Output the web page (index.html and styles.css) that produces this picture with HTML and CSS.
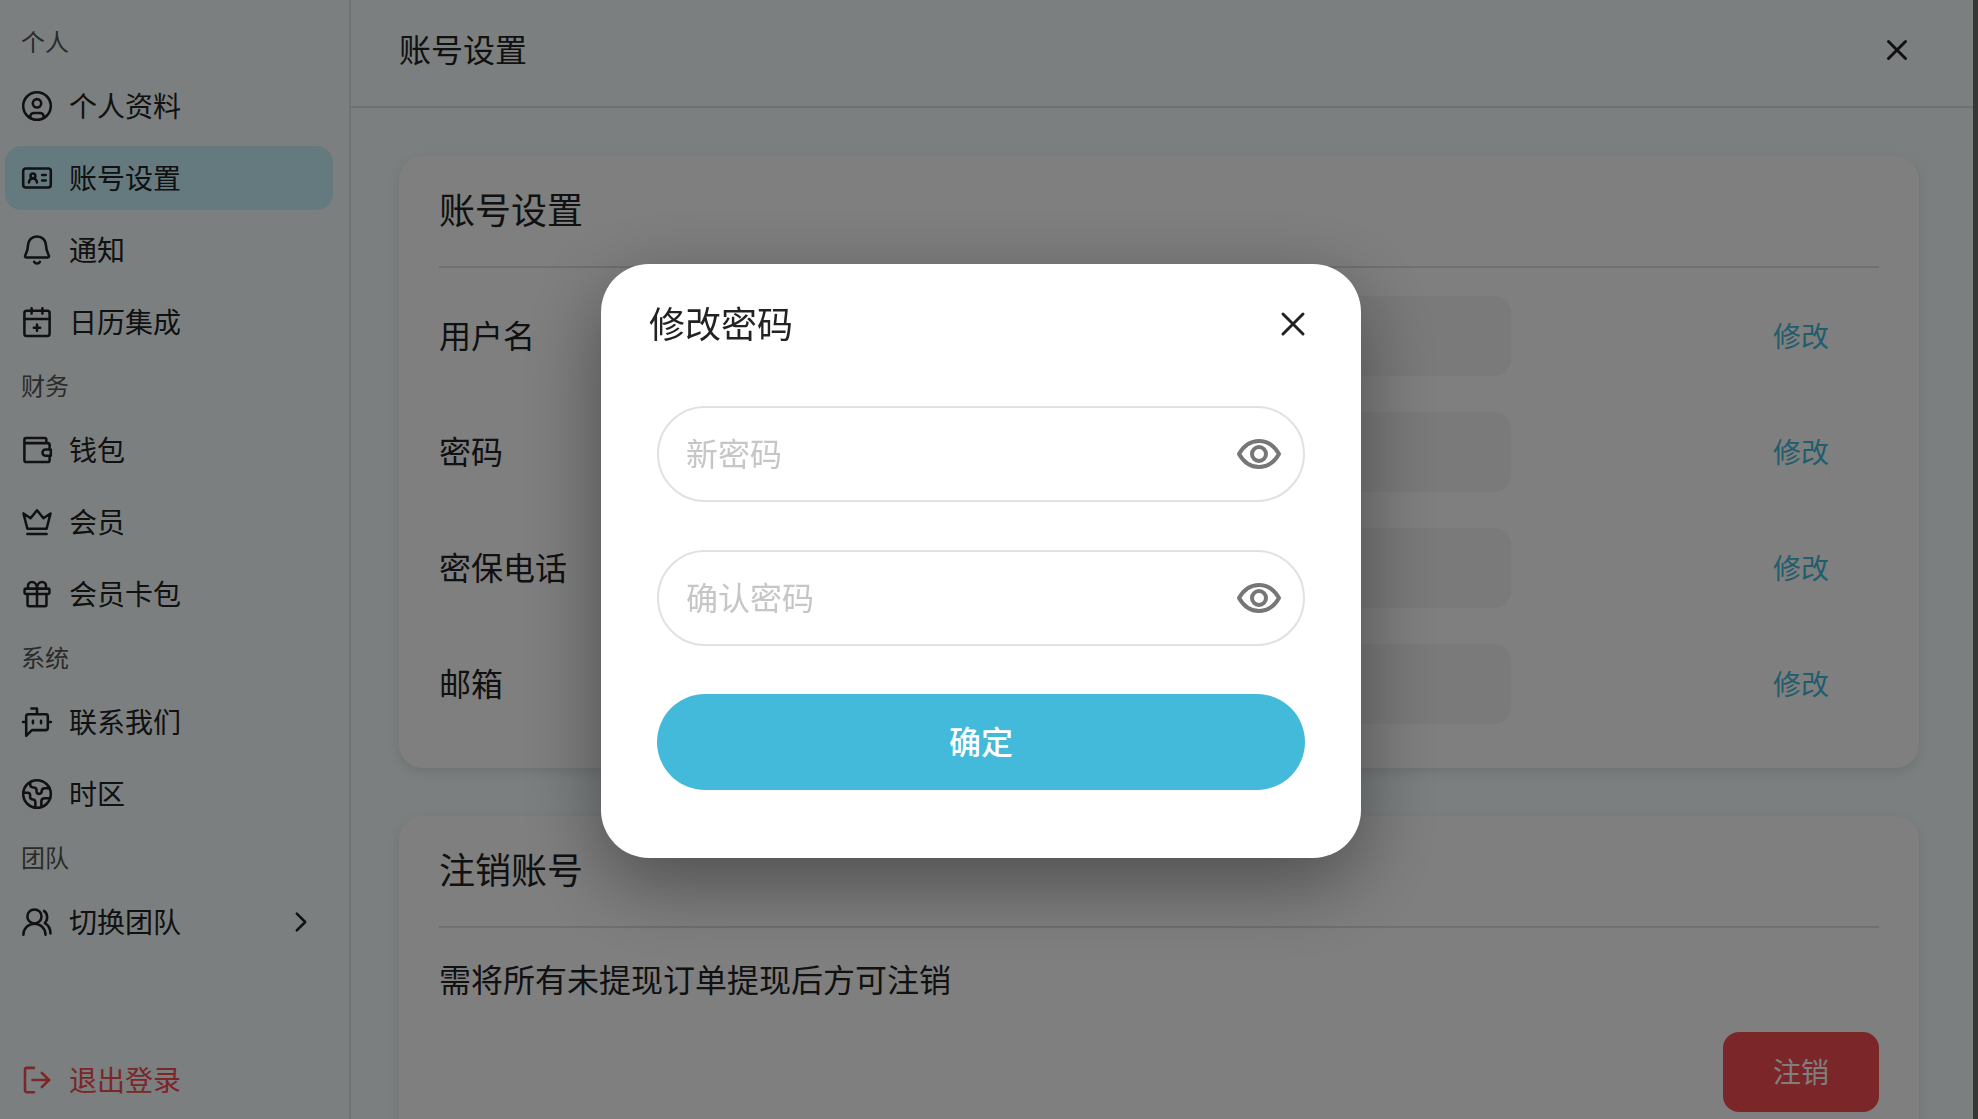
FILE: index.html
```
<!DOCTYPE html>
<html lang="zh-CN">
<head>
    <meta charset="UTF-8">
    <meta name="viewport" content="width=device-width, initial-scale=1.0">
    <title>账号设置</title>
    <link rel="stylesheet" href="styles.css">
</head>
<body>
    <div class="app">
        <nav class="sidebar">
            <h2 class="group">个人</h2>
            <a class="item" href="#profile">
                <svg class="icon" viewBox="0 0 24 24"><circle cx="12" cy="12" r="9.2"/><circle cx="12" cy="10.2" r="2.8"/><path d="M7.5 20v-.9a2.5 2.5 0 0 1 2.5-2.5h4a2.5 2.5 0 0 1 2.5 2.5v.9"/></svg>
                <span>个人资料</span>
            </a>
            <a class="item active" href="#account">
                <svg class="icon" viewBox="0 0 24 24"><rect x="2.8" y="5.7" width="18.4" height="12.6" rx="1.6"/><circle cx="9.3" cy="10.6" r="1.6"/><path d="M6.6 15c.2-1.7 1.2-2.7 2.7-2.7s2.5 1 2.7 2.7M15.4 10h2.4M15.4 13.7h2.4"/></svg>
                <span>账号设置</span>
            </a>
            <a class="item" href="#notice">
                <svg class="icon" viewBox="0 0 24 24"><path d="M12 3c-3.4 0-6 2.5-6 5.9 0 4.3-2 6.3-2 7.3 0 .5.3.8.8.8h14.4c.5 0 .8-.3.8-.8 0-1-2-3-2-7.3C18 5.500 15.4 3 12 3ZM10.1 19.9c.4.7 1.1 1.1 1.9 1.1s1.5-.4 1.9-1.1"/></svg>
                <span>通知</span>
            </a>
            <a class="item" href="#calendar">
                <svg class="icon" viewBox="0 0 24 24"><rect x="3.6" y="4.5" width="16.8" height="16.8" rx="1.5"/><path d="M3.6 10h16.8M8.4 2.8v3.6M15.6 2.8v3.6M12 13.7v4.2M9.9 15.8h4.2"/></svg>
                <span>日历集成</span>
            </a>
            <h2 class="group">财务</h2>
            <a class="item" href="#wallet">
                <svg class="icon" viewBox="0 0 24 24"><path d="M18.2 7.4V5a1 1 0 0 0-1-1H4.7a1.1 1.1 0 0 0-1.1 1.1v13.7A1.2 1.2 0 0 0 4.800 20h14.4a1.2 1.2 0 0 0 1.2-1.2V16M3.6 7.4h15.6a1.2 1.2 0 0 1 1.2 1.2v3M21.2 11.7h-3.500a2 2 0 0 0 0 4.100h3.500Z"/></svg>
                <span>钱包</span>
            </a>
            <a class="item" href="#vip">
                <svg class="icon" viewBox="0 0 24 24"><path d="M3 6.3 5.6 16.5h12.8L21 6.3l-4.7 3.2L12 4.200 7.700 9.500ZM5.600 20h12.800"/></svg>
                <span>会员</span>
            </a>
            <a class="item" href="#cards">
                <svg class="icon" viewBox="0 0 24 24"><rect x="3.7" y="8.4" width="16.6" height="3.6" rx=".8"/><path d="M5.7 12v7.2a1 1 0 0 0 1 1h10.6a1 1 0 0 0 1-1V12M12 8.4v11.8M12 8.400C12 5.600 10.500 4 8.600 4 6.400 4 5.200 6.200 6.400 8.400M12 8.400C12 5.600 13.500 4 15.400 4c2.200 0 3.400 2.200 2.200 4.400"/></svg>
                <span>会员卡包</span>
            </a>
            <h2 class="group">系统</h2>
            <a class="item" href="#contact">
                <svg class="icon" viewBox="0 0 24 24"><path d="M4.800 21.200V8.200A1.400 1.400 0 0 1 6.200 6.800h11.600a1.400 1.400 0 0 1 1.400 1.400V16a1.400 1.400 0 0 1-1.400 1.400H8.600ZM12 6.800V3H8.300M2.700 12h2M19.300 12h2M9.300 11.200v1.600M14.700 11.200v1.600"/></svg>
                <span>联系我们</span>
            </a>
            <a class="item" href="#timezone">
                <svg class="icon" viewBox="0 0 24 24"><circle cx="12" cy="12" r="9.2"/><path d="M7.5 4.200v1.700c0 1 .8 1.700 1.900 1.700 1.500 0 2.300.6 2.300 1.700v1c0 1 .7 1.600 1.700 1.600s1.700-.7 1.700-1.700c0-1.300.8-2 2.200-2h3M2.900 11.100h3c1 0 1.500.6 1.500 1.600v1.200c0 1.100.6 1.700 1.700 1.700 1.200 0 1.800.6 1.800 1.700v3.700M20.800 14.800h-3.600c-1.500 0-2.300.7-2.300 2.100v3.600"/></svg>
                <span>时区</span>
            </a>
            <h2 class="group">团队</h2>
            <a class="item" href="#team">
                <svg class="icon" viewBox="0 0 24 24"><circle cx="10.3" cy="8.3" r="4.7"/><path d="M2.900 20.500a7.400 7.400 0 0 1 14.800 0M16.700 4.600c2.500 1.800 2.800 5.700.5 8.100 2.200 1.200 3.700 3.800 3.800 6.900"/></svg>
                <span>切换团队</span>
                <svg class="icon arrow" viewBox="0 0 24 24"><path d="m9.200 6.400 5.600 5.600-5.600 5.600"/></svg>
            </a>
            <a class="item logout" href="#logout">
                <svg class="icon" viewBox="0 0 24 24"><path d="M10 3.900H5.200a1.200 1.200 0 0 0-1.200 1.200v13.800a1.200 1.200 0 0 0 1.200 1.200H10M9 12h11.200M15.200 7.200l4.800 4.800-4.800 4.800"/></svg>
                <span>退出登录</span>
            </a>
        </nav>

        <main class="main">
            <header class="topbar">
                <h1 class="page-title">账号设置</h1>
                <button class="close" type="button" aria-label="关闭">
                    <svg viewBox="0 0 32 32"><path d="m7.500 7.500 17 17m0-17-17 17"/></svg>
                </button>
            </header>
            <div class="content">
                <section class="card">
                    <h2 class="card-title">账号设置</h2>
                    <div class="rows">
                        <div class="row">
                            <label for="username">用户名</label>
                            <input class="value" id="username" type="text" disabled>
                            <button class="btn link" type="button">修改</button>
                        </div>
                        <div class="row">
                            <label for="password">密码</label>
                            <input class="value" id="password" type="text" disabled>
                            <button class="btn link" type="button">修改</button>
                        </div>
                        <div class="row">
                            <label for="phone">密保电话</label>
                            <input class="value" id="phone" type="text" disabled>
                            <button class="btn link" type="button">修改</button>
                        </div>
                        <div class="row">
                            <label for="email">邮箱</label>
                            <input class="value" id="email" type="text" disabled>
                            <button class="btn link" type="button">修改</button>
                        </div>
                    </div>
                </section>
                <section class="card">
                    <h2 class="card-title">注销账号</h2>
                    <p class="tip">需将所有未提现订单提现后方可注销</p>
                    <div class="actions">
                        <button class="btn danger" type="button">注销</button>
                    </div>
                </section>
            </div>
        </main>
    </div>

    <div class="overlay">
        <form class="modal" role="dialog" aria-modal="true" aria-labelledby="modalTitle">
            <div class="modal-head">
                <h2 class="modal-title" id="modalTitle">修改密码</h2>
                <button class="close" type="button" aria-label="关闭">
                    <svg viewBox="0 0 32 32"><path d="m6 6 20 20m0-20-20 20"/></svg>
                </button>
            </div>
            <div class="modal-body">
                <div class="field">
                    <input type="password" placeholder="新密码" aria-label="新密码">
                    <button class="eye" type="button" aria-label="显示密码">
                        <svg viewBox="0 0 48 48"><path d="M4 24c5-8.700 11.800-13 20-13s15 4.300 20 13c-5 8.700-11.800 13-20 13S9 32.700 4 24Z"/><circle cx="24" cy="24" r="7"/></svg>
                    </button>
                </div>
                <div class="field">
                    <input type="password" placeholder="确认密码" aria-label="确认密码">
                    <button class="eye" type="button" aria-label="显示密码">
                        <svg viewBox="0 0 48 48"><path d="M4 24c5-8.700 11.800-13 20-13s15 4.300 20 13c-5 8.700-11.800 13-20 13S9 32.700 4 24Z"/><circle cx="24" cy="24" r="7"/></svg>
                    </button>
                </div>
                <button class="submit" type="submit">确定</button>
            </div>
        </form>
    </div>
</body>
</html>
```
FILE: styles.css
```
* { box-sizing: border-box; }
body {
    margin: 0;
    background: #6c6c6c;
    color: #222;
    font-family: "Noto Sans CJK SC", sans-serif;
    font-size: 32px;
    line-height: 48px;
    overflow: hidden;
}
h1, h2, p { margin: 0; font-weight: 400; }
button, input { font: inherit; color: inherit; }
button { border: none; background: none; padding: 0; cursor: pointer; }
svg {
    display: block;
    fill: none;
    stroke: currentColor;
    stroke-linecap: round;
    stroke-linejoin: round;
}

.app {
    display: flex;
    height: 100vh;
    margin-right: 5px;
    background: #f7feff;
}

/* sidebar */
.sidebar {
    display: flex;
    flex-direction: column;
    flex: 0 0 351px;
    gap: 8px;
    padding: 18px 16px 7px 5px;
    border-right: 2px solid #e3e3e6;
}
.group {
    height: 48px;
    padding: 0 16px;
    font-size: 24px;
    line-height: 46px;
    color: #555;
}
.item {
    display: flex;
    align-items: center;
    gap: 14px;
    height: 64px;
    padding: 0 14px;
    border-radius: 16px;
    font-size: 28px;
    color: inherit;
    text-decoration: none;
}
.item span { padding-bottom: 2px; }
.item.active { background: #cbf5ff; }
.item.logout { margin-top: auto; color: #f64c50; }
.icon { width: 36px; height: 36px; stroke-width: 1.7; }
.arrow { margin-left: auto; }

/* main */
.main {
    display: flex;
    flex-direction: column;
    flex: 1;
    min-width: 0;
}
.topbar {
    display: flex;
    justify-content: space-between;
    align-items: center;
    flex: none;
    height: 108px;
    padding: 0 60px 6px 48px;
    border-bottom: 2px solid #e0e2e3;
}
.page-title { padding-bottom: 4px; font-size: 32px; }
.close svg { width: 32px; height: 32px; stroke-width: 3; }
.content {
    display: flex;
    flex-direction: column;
    flex: 1;
    gap: 48px;
    min-height: 0;
    padding: 48px 54px 0 48px;
    overflow: hidden;
}
.card {
    flex: none;
    padding: 28px 40px 44px;
    border-radius: 24px;
    background: #fff;
    box-shadow: 0 4px 12px rgba(0,0,0,0.1);
}
.card-title {
    padding-bottom: 34px;
    border-bottom: 2px solid #e0e0e0;
    font-size: 36px;
}
.rows {
    display: grid;
    gap: 36px;
    padding-top: 28px;
}
.row {
    display: grid;
    grid-template-columns: 200px 1fr 156px;
    align-items: center;
}
.row label { padding-bottom: 4px; }
.value {
    width: calc(100% - 212px);
    height: 80px;
    padding: 0 28px;
    border: none;
    border-radius: 16px;
    background: #f5f5f5;
}
.btn {
    width: 156px;
    height: 80px;
    padding-bottom: 2px;
    border-radius: 16px;
    font-size: 28px;
}
.link { color: #43bad9; }
.danger { background: #f64c50; color: #fff; }
.tip { padding: 26px 0 30px; }
.actions { display: flex; justify-content: flex-end; }

/* change password dialog */
.overlay {
    position: fixed;
    inset: 0;
    display: grid;
    place-items: center;
    padding: 2px 16px 0 0;
    background: rgba(0,0,0,0.5);
}
.modal {
    width: 760px;
    max-width: 100%;
    padding: 34px 48px 68px;
    border-radius: 48px;
    background: #fff;
    box-shadow: 0 24px 80px rgba(0,0,0,0.4);
}
.modal-head {
    display: flex;
    justify-content: space-between;
    align-items: center;
    padding-right: 4px;
}
.modal-title { padding-bottom: 4px; font-size: 36px; }
.modal-body {
    display: grid;
    gap: 48px;
    padding: 56px 8px 0;
}
.field {
    display: flex;
    align-items: center;
    height: 96px;
    padding: 0 20px 0 27px;
    border: 2px solid #e0e0e6;
    border-radius: 48px;
}
.field input {
    flex: 1;
    min-width: 0;
    padding: 0 0 4px;
    border: none;
    outline: none;
    background: none;
}
.field input::placeholder { color: #c6c6c6; }
.eye { color: #767676; }
.eye svg { width: 48px; height: 48px; stroke-width: 4; }
.submit {
    height: 96px;
    padding-bottom: 4px;
    border-radius: 48px;
    background: #43bad9;
    color: #fff;
    font-weight: 500;
}
```
